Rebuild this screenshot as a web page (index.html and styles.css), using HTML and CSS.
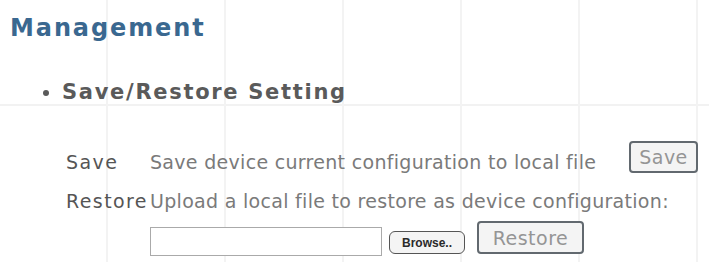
FILE: index.html
```html
<!DOCTYPE html>
<html>
<head>
<meta charset="utf-8">
<link rel="stylesheet" href="styles.css">
</head>
<body>
<div class="page">
  <h1 class="title">Management</h1>
  <ul class="sections">
    <li class="section-title">Save/Restore Setting</li>
  </ul>
  <div class="form">
    <div class="label">Save</div>
    <div class="row-save">
      <span class="desc">Save device current configuration to local file</span>
      <button class="btn btn-save">Save</button>
    </div>
    <div class="label">Restore</div>
    <div class="desc">Upload a local file to restore as device configuration:</div>
    <div class="row-file">
      <span class="file-input"></span>
      <button class="btn btn-browse">Browse..</button>
      <button class="btn btn-restore">Restore</button>
    </div>
  </div>
</div>
</body>
</html>
```

FILE: styles.css
```css
html, body {
  margin: 0;
  padding: 0;
  background: #ffffff;
}
body {
  width: 709px;
  height: 262px;
  overflow: hidden;
  font-family: "DejaVu Sans", Verdana, sans-serif;
}
.page {
  height: 262px;
  box-sizing: border-box;
  padding: 13px 0 0 10px;
  background-color: #fff;
  background-image:
    repeating-linear-gradient(90deg, transparent 0, transparent 106px, #f3f3f3 106px, #f3f3f3 108px, transparent 108px, transparent 118px),
    linear-gradient(180deg, transparent 104px, #f2f2f2 104px, #f2f2f2 106px, transparent 106px);
}
.title {
  margin: 0;
  font-size: 24px;
  letter-spacing: 1.9px;
  font-weight: bold;
  color: #3a6890;
  line-height: 30px;
}
.sections {
  margin: 37px 0 0 0;
  padding: 0 0 0 52px;
  list-style: disc;
  color: #5a5a5a;
}
.section-title {
  font-size: 21px;
  letter-spacing: 1.7px;
  font-weight: bold;
  line-height: 24px;
}
.form {
  margin: 37px 0 0 56px;
  display: grid;
  grid-template-columns: 84px 1fr;
  grid-template-rows: 32px 39px 44px;
  align-items: end;
  font-size: 19px;
  line-height: 22px;
  letter-spacing: 0.3px;
  color: #7a7a7a;
}
.label {
  color: #555;
  letter-spacing: 1.4px;
}
.row-save {
  display: flex;
  align-items: flex-end;
  justify-content: space-between;
  width: 548px;
  height: 32px;
}
.row-save .btn-save {
  align-self: flex-start;
}
.row-file {
  grid-column: 2;
  display: flex;
  align-items: flex-end;
  height: 44px;
}
.file-input {
  flex: 0 0 auto;
  width: 230px;
  height: 27px;
  border: 1px solid #aaa;
  background: #fff;
}
.btn {
  flex: 0 0 auto;
  font-family: "DejaVu Sans", Verdana, sans-serif;
  background: #f4f4f4;
  border: 2px solid #62696f;
  border-radius: 4px;
  color: #959595;
  padding: 0;
  letter-spacing: 0.5px;
}
.btn-save {
  width: 69px;
  height: 32px;
  font-size: 19px;
}
.btn-browse {
  width: 76px;
  height: 23px;
  margin: 0 0 2px 7px;
  font-family: "Liberation Sans", Arial, sans-serif;
  font-weight: bold;
  font-size: 12px;
  letter-spacing: 0;
  color: #2a2a2a;
  border-width: 1px;
  border-color: #555;
  border-radius: 6px;
}
.btn-restore {
  width: 107px;
  height: 33px;
  margin: 0 0 2px 12px;
  font-size: 19px;
}
```
